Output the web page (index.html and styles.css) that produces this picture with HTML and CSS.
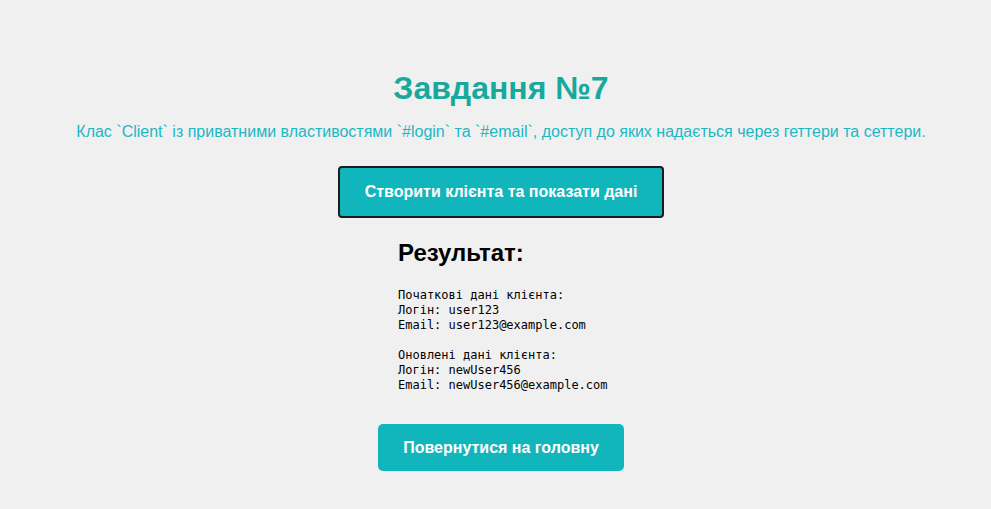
FILE: index.html
```html
<!DOCTYPE html>
<html lang="uk">
<head>
<meta charset="utf-8">
<title>Завдання №7</title>
<link rel="stylesheet" href="styles.css">
</head>
<body>
<main class="page">
  <h1 class="title">Завдання №7</h1>
  <p class="desc">Клас `Client` із приватними властивостями `#login` та `#email`, доступ до яких надається через геттери та сеттери.</p>
  <button class="run-btn">Створити клієнта та показати дані</button>
  <section class="result">
    <h2 class="result-title">Результат:</h2>
<pre class="output">Початкові дані клієнта:
Логін: user123
Email: user123@example.com

Оновлені дані клієнта:
Логін: newUser456
Email: newUser456@example.com</pre>
  </section>
  <a class="back-btn" href="#">Повернутися на головну</a>
</main>
</body>
</html>
```
FILE: styles.css
```css
html, body {
  margin: 0;
  padding: 0;
  background: #f0f0f0;
}
body {
  font-family: Arial, "Liberation Sans", sans-serif;
}
.page {
  display: flex;
  flex-direction: column;
  align-items: center;
  padding-top: 68px;
  padding-left: 11px;
}
.title {
  margin: 0;
  font-size: 32px;
  line-height: 40px;
  font-weight: bold;
  color: #17a99c;
}
.desc {
  margin: 14px 0 0;
  font-size: 16px;
  line-height: 20px;
  color: #1bb8c4;
}
.run-btn {
  margin-top: 24px;
  width: 326px;
  height: 52px;
  background: #10b6bc;
  border: 2px solid #1c1c1c;
  border-radius: 4px;
  color: #fff;
  font-family: Arial, "Liberation Sans", sans-serif;
  font-size: 16px;
  font-weight: bold;
  padding: 0;
}
.result {
  margin-top: 20px;
  align-self: flex-start;
  margin-left: 387px;
}
.result-title {
  margin: 0;
  font-size: 24px;
  line-height: 30px;
  font-weight: bold;
  color: #000;
}
.output {
  margin: 20px 0 0;
  font-family: "DejaVu Sans Mono", monospace;
  font-size: 12px;
  line-height: 15px;
  color: #000;
}
.back-btn {
  margin-top: 31px;
  width: 246px;
  height: 47px;
  display: flex;
  align-items: center;
  justify-content: center;
  background: #10b6bc;
  border-radius: 5px;
  color: #fff;
  text-decoration: none;
  font-size: 16px;
  font-weight: bold;
}
```
